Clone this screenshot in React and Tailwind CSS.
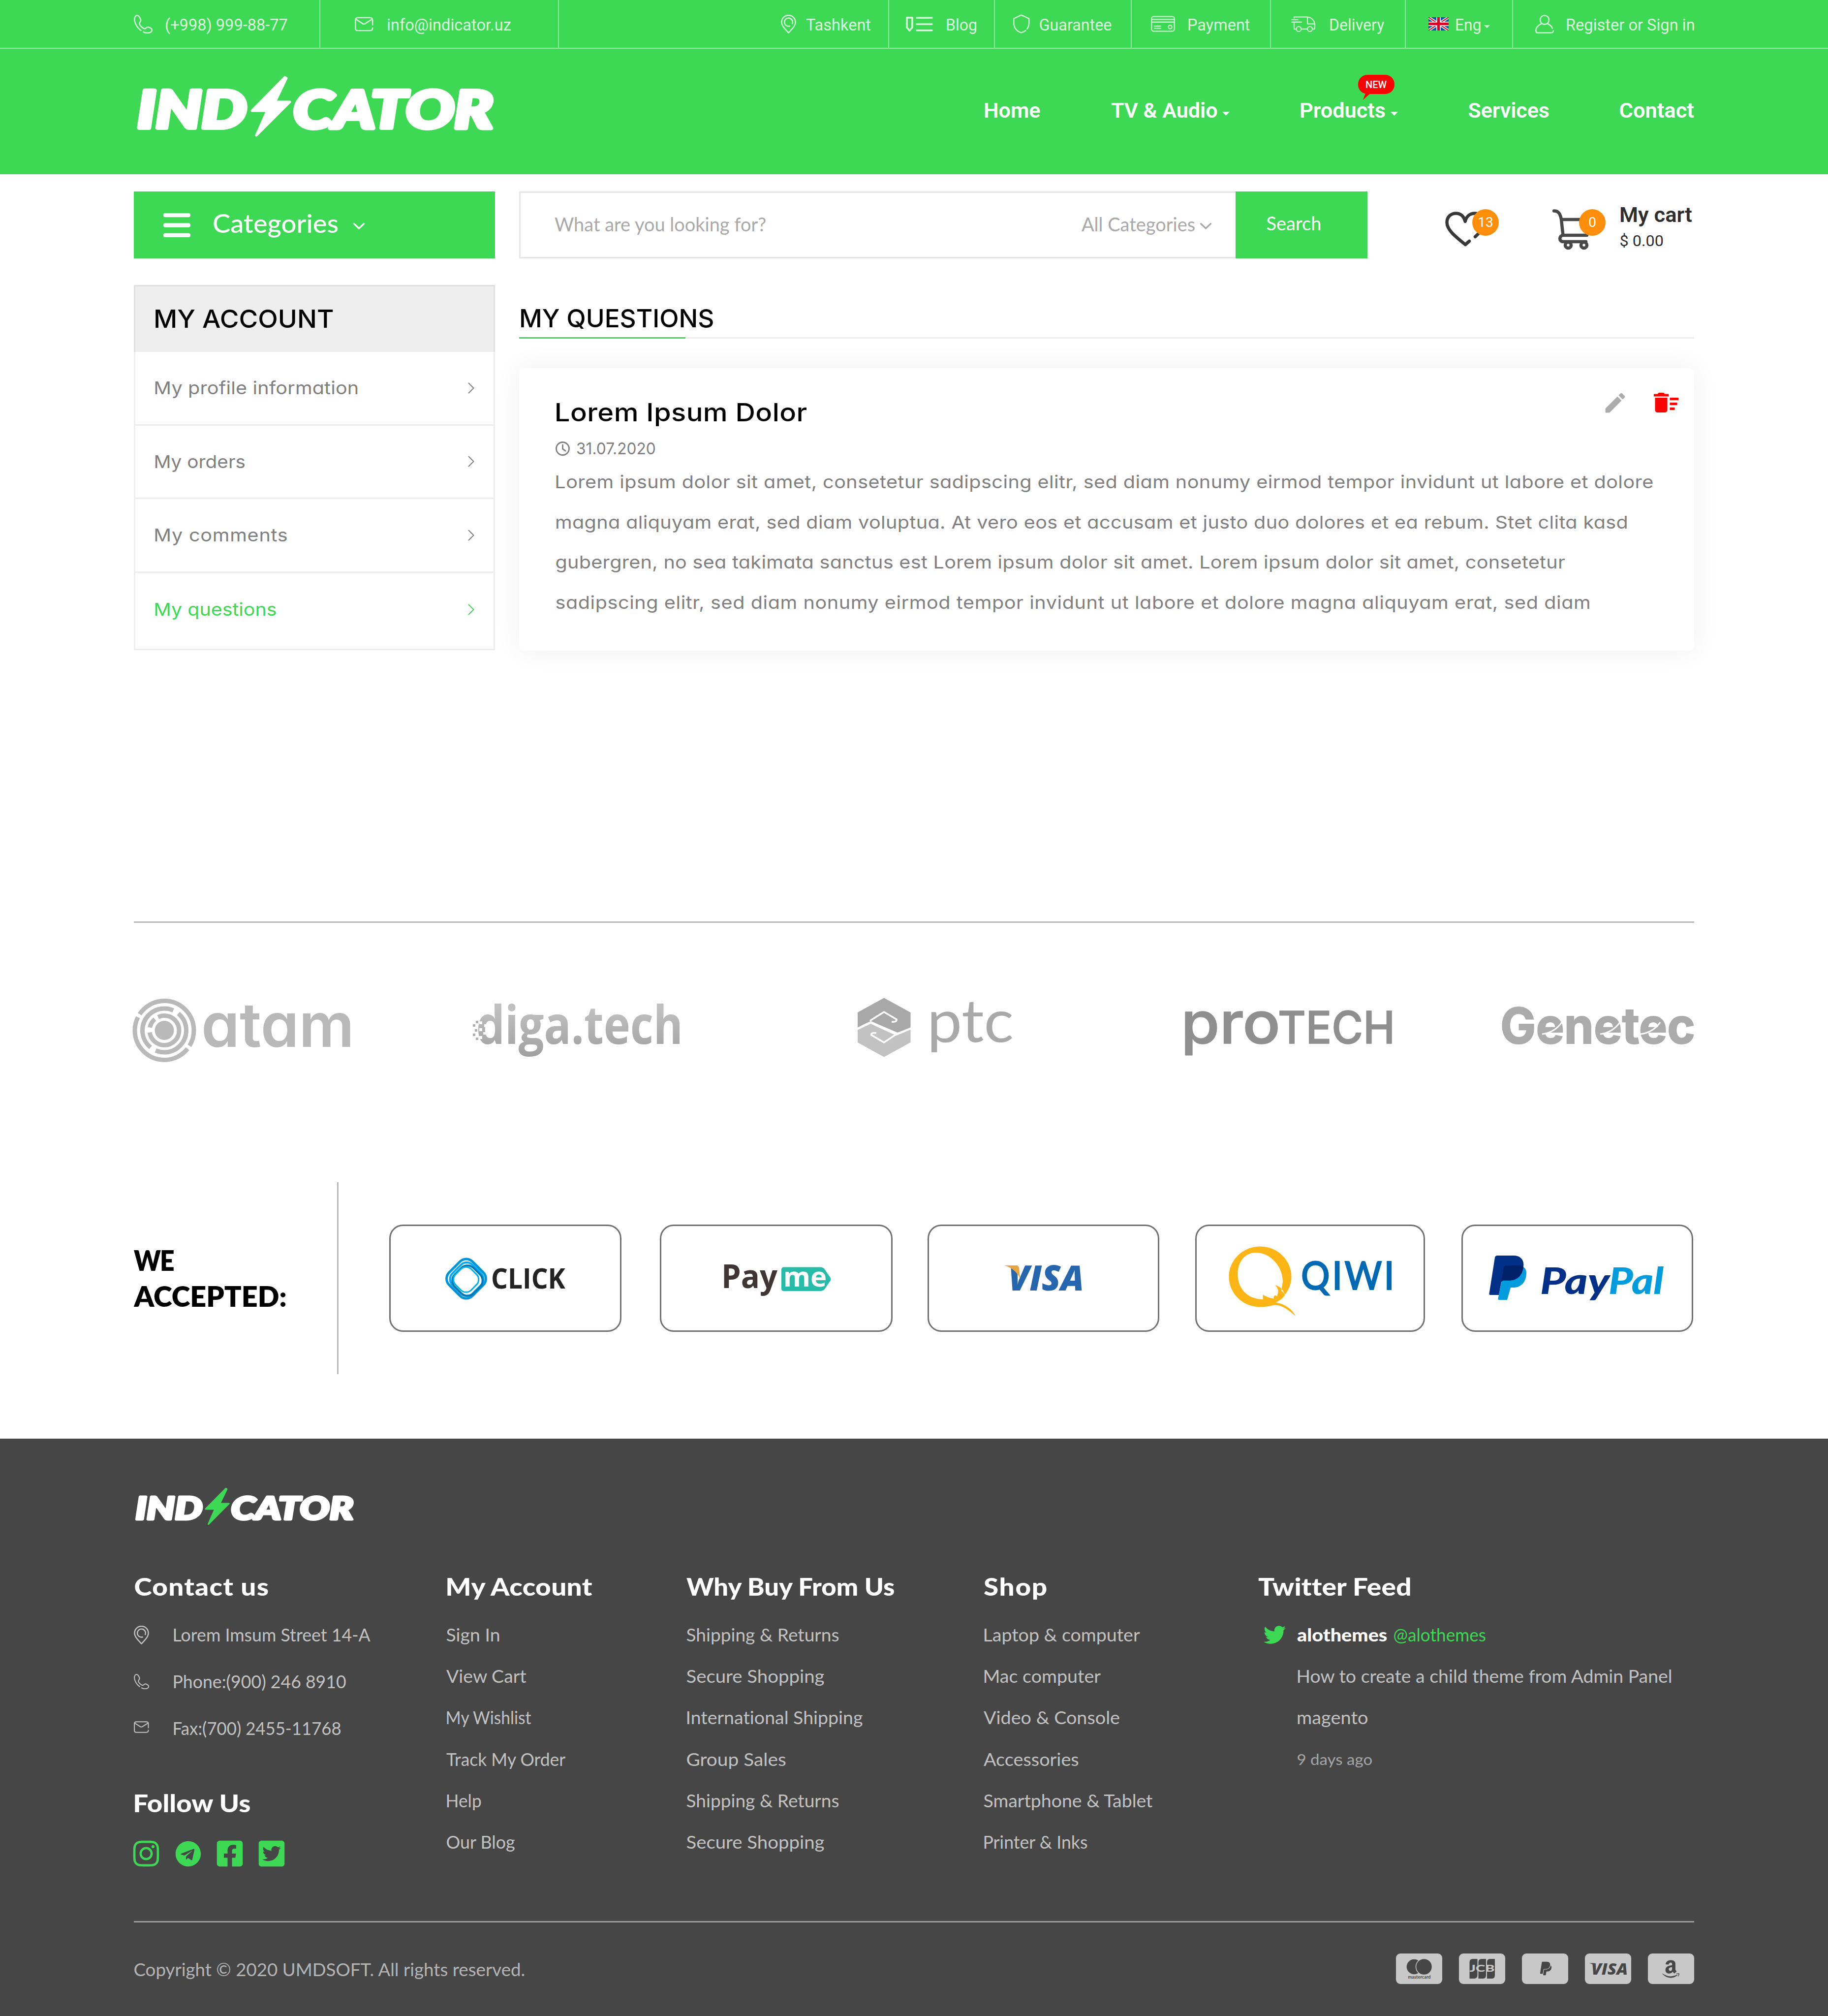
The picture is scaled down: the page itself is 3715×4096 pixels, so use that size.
import { useLayoutEffect, useRef } from "react";
import { MdEdit, MdDeleteSweep } from "react-icons/md";
import {
  FaInstagram,
  FaTelegram,
  FaFacebookSquare,
  FaTwitterSquare,
  FaTwitter,
  FaPaypal,
  FaAmazon,
} from "react-icons/fa";

const ROBOTO = "[font-family:Roboto,sans-serif]";
const LATO = "[font-family:Lato,sans-serif]";
const INTER = "[font-family:Inter,sans-serif] [font-feature-settings:'cv11']";

const canvas = typeof document === "undefined" ? null : document.createElement("canvas");

/* One line of text whose ink spans w pixels: the glyphs are widened or
   narrowed a little, and any remainder goes into the tracking. */
function Fit({ w, className = "", children }) {
  const box = useRef(null);
  const ref = useRef(null);
  useLayoutEffect(() => {
    const el = ref.current;
    const cs = getComputedStyle(el);
    const ctx = canvas.getContext("2d");
    ctx.font = `${cs.fontStyle} ${cs.fontWeight} ${cs.fontSize} ${cs.fontFamily}`;
    const text = el.textContent;
    const m = ctx.measureText(text);
    el.style.letterSpacing = "0px";
    const natural = el.offsetWidth;
    const left = -m.actualBoundingBoxLeft * 0.5;
    const right = (m.width - m.actualBoundingBoxRight) * 0.7;
    const ink = natural - left - right;
    const scale = Math.min(1.1, Math.max(0.92, w / ink));
    el.style.letterSpacing = (w / scale - ink) / Math.max(1, text.length - 1) + "px";
    el.style.transform = `translateX(${-left * scale}px) scaleX(${scale})`;
    box.current.style.width = w + "px";
  }, [w]);
  return (
    <span ref={box} className={"block shrink-0 whitespace-nowrap [font-variant-ligatures:none] " + className}>
      <span ref={ref} className="inline-block w-max origin-left align-top">
        {children}
      </span>
    </span>
  );
}

function Line({ w, h, vw, vh, sw = 2.7, className = "", children }) {
  return (
    <svg
      width={w}
      height={h}
      viewBox={`0 0 ${vw} ${vh}`}
      fill="none"
      stroke="currentColor"
      strokeWidth={sw}
      strokeLinecap="round"
      strokeLinejoin="round"
      className={"shrink-0 " + className}
    >
      {children}
    </svg>
  );
}

const Phone = ({ s = 38 }) => (
  <Line w={s} h={s} vw={42} vh={42}>
    <path d="M16 35C7 29 1 17 1.5 9C2 4 5 1 8 1.5C11 2 14 7 15.5 11C17 15 12 17 12.5 20C13 24 20 31 24.5 31.5C27 31.5 29 27 32 27.5C36 28.5 40 31 41 34C41 39 35 41 30 41C27 41 24 40 21.5 38.5" />
  </Line>
);
const Mail = ({ w = 38, h = 30 }) => (
  <Line w={w} h={h} vw={42} vh={32}>
    <path d="M40 18V7Q40 1.5 34 1.5H7Q1.5 1.5 1.5 7V25Q1.5 30.5 7 30.5H34Q40 30.5 40 24.5M2.5 5L17 14.5Q20.5 17 24 14.5L39 5" />
  </Line>
);
const Pin = () => (
  <Line w={31} h={38} vw={34} vh={42}>
    <path d="M17 40.5C10 33 1.5 25 1.5 16.5A15.5 15.5 0 0 1 32.5 16.5C32.5 25 24 33 17 40.5Z" />
    <path d="M25.5 20A9.2 9.2 0 1 0 19.5 25.4" />
  </Line>
);
const Blog = () => (
  <Line w={55} h={30} vw={60} vh={33} sw={4}>
    <path d="M2 2H14V24L8 31L2 24Z" />
    <path d="M24 2.5H58M24 16.5H58M24 30.5H58" />
  </Line>
);
const Shield = () => (
  <Line w={34} h={39} vw={38} vh={43}>
    <path d="M31.5 33C34.5 29 36 25 36 20V9.5L18.5 1.5L1.5 9.5V20C1.5 31 9 38.5 18.5 41.5C22.5 40.5 25.5 39 28.5 36.5" />
  </Line>
);
const Card = () => (
  <Line w={49} h={33} vw={54} vh={36} sw={2.3}>
    <rect x="1.5" y="1.5" width="51" height="33" rx="5" />
    <path d="M1.5 8H52.5M1.5 14H52.5M7.5 23H22M7.5 28H22" />
    <circle cx="43" cy="25" r="4" />
  </Line>
);
const Truck = () => (
  <Line w={49} h={32} vw={54} vh={35} sw={2.3}>
    <path d="M6.5 4V1.5H36C46 2 52 10 53 17L52.5 28.5H48M36 28.5H23M11 28.5H6.5V14M36.5 1.5V17H52.5M1.5 7.5H15M1.5 13H23" />
    <circle cx="17" cy="28.5" r="5.5" />
    <circle cx="42" cy="28.5" r="5.5" />
  </Line>
);
const User = () => (
  <Line w={38} h={38} vw={42} vh={42}>
    <circle cx="21" cy="11.5" r="10" />
    <path d="M14 20C6 24 1 30 1.5 36.5Q2 40.5 6 40.5H36Q40.5 40.5 40.5 36M28 20C34 23 37.5 27 38.5 30.5" />
  </Line>
);
const Flag = () => (
  <svg width="41" height="27" viewBox="0 0 60 40" preserveAspectRatio="none" className="shrink-0">
    <rect width="60" height="40" fill="#0052b4" />
    <path d="M0 0L60 40M60 0L0 40" stroke="#fff" strokeWidth="8" />
    <path d="M0 0L60 40M60 0L0 40" stroke="#d80027" strokeWidth="3" />
    <path d="M30 0V40M0 20H60" stroke="#fff" strokeWidth="13" />
    <path d="M30 0V40M0 20H60" stroke="#d80027" strokeWidth="8" />
  </svg>
);
const Caret = ({ w = 15, h = 8, className = "" }) => (
  <svg width={w} height={h} viewBox="0 0 15 8" preserveAspectRatio="none" className={"shrink-0 " + className}>
    <path d="M0 0H15L7.5 8Z" fill="currentColor" />
  </svg>
);
const ChevDown = ({ className = "" }) => (
  <Line w={25} h={15} vw={25} vh={15} sw={3.2} className={className}>
    <path d="M2.5 2.5L12.5 12L22.5 2.5" />
  </Line>
);

function Logo({ width, bolt }) {
  return (
    <svg width={width} height={(width * 132) / 738} viewBox="272 150 738 132" className="shrink-0 overflow-visible">
      <g
        fill="#fff"
        stroke="#fff"
        strokeWidth="8"
        strokeLinejoin="round"
        fontFamily="Lato, sans-serif"
        fontWeight="900"
        fontStyle="italic"
        fontSize="104"
      >
        <text x="279" y="259.500" textLength="222" lengthAdjust="spacingAndGlyphs">IND</text>
        <text x="596" y="259.500" textLength="406" lengthAdjust="spacingAndGlyphs">CATOR</text>
      </g>
      <path
        d="M579 157L512 225L543 225L521 275L589 207L559 207L582 159Z"
        fill={bolt}
        stroke={bolt}
        strokeWidth="5"
        strokeLinejoin="round"
      />
    </svg>
  );
}

const CELL = "flex h-full shrink-0 items-center border-r-2 border-white/40";
const TXT = "mt-[4px] text-[33px] leading-none " + ROBOTO;

function Header() {
  return (
    <header className="h-[354px] bg-[#3dd955] text-white">
      <div className="flex h-[99px] items-center border-b-2 border-white/45 pl-[272px] text-[#d9f7dd]">
        <div className={CELL + " w-[379px] gap-[26px]"}>
          <Phone />
          <Fit w={248} className={TXT}>(+998) 999-88-77</Fit>
        </div>
        <div className={CELL + " w-[485px] gap-[28px] pl-[70px]"}>
          <Mail />
          <Fit w={251.5} className={TXT}>info@indicator.uz</Fit>
        </div>
        <div className={CELL + " ml-[451px] w-[220px] gap-[20px]"}>
          <Pin />
          <Fit w={131.5} className={TXT}>Tashkent</Fit>
        </div>
        <div className={CELL + " w-[215px] gap-[27px] pl-[34px]"}>
          <Blog />
          <Fit w={62} className={TXT}>Blog</Fit>
        </div>
        <div className={CELL + " w-[278px] gap-[19px] pl-[37px]"}>
          <Shield />
          <Fit w={147} className={TXT}>Guarantee</Fit>
        </div>
        <div className={CELL + " w-[283px] gap-[26px] pl-[39px]"}>
          <Card />
          <Fit w={125.5} className={TXT}>Payment</Fit>
        </div>
        <div className={CELL + " w-[274px] gap-[29px] pl-[41px]"}>
          <Truck />
          <Fit w={112} className={TXT}>Delivery</Fit>
        </div>
        <div className={CELL + " w-[218px] pl-[46px]"}>
          <Flag />
          <Fit w={52} className={TXT + " ml-[14px]"}>Eng</Fit>
          <Caret w={12} h={6} className="ml-[6px] mt-[11px]" />
        </div>
        <div className="flex shrink-0 items-center gap-[25px] pl-[45px]">
          <User />
          <Fit w={260} className={TXT}>Register or Sign in</Fit>
        </div>
      </div>
      <div className={"flex items-start pl-[272px] pt-[51px] text-[42px] font-semibold leading-none " + ROBOTO}>
        <Logo width={738} bolt="#fff" />
        <nav className="ml-[990px] mt-[54px] flex items-center gap-[143px]">
          <Fit w={114.5}>Home</Fit>
          <div className="flex items-center gap-[10px]">
            <Fit w={216}>TV &amp; Audio</Fit>
            <Caret className="mt-[11px]" />
          </div>
          <div className="relative flex items-center gap-[11px]">
            <Fit w={173}>Products</Fit>
            <Caret className="mt-[11px]" />
            <div className="absolute -top-[52px] left-[118px] flex h-[39px] w-[74px] items-center justify-center rounded-[19px] bg-[#ff0000] text-[20px] font-medium leading-none">
              NEW
              <svg width="18" height="16" viewBox="0 0 18 16" className="absolute left-[10px] top-[35px]">
                <path d="M6 0L0 16L18 0Z" fill="#ff0000" />
              </svg>
            </div>
          </div>
          <Fit w={164}>Services</Fit>
          <Fit w={151.5}>Contact</Fit>
        </nav>
      </div>
    </header>
  );
}

function Badge({ n }) {
  return (
    <span className={"absolute right-0 top-0 flex size-[54px] items-center justify-center rounded-full bg-[#ff8f0b] text-[28px] leading-none text-white " + ROBOTO}>
      {n}
    </span>
  );
}

function SearchRow() {
  return (
    <div className="mt-[35px] flex h-[136px] items-center pl-[272px]">
      <div className={"flex h-full w-[734px] shrink-0 items-center bg-[#3dd955] pb-[10px] pl-[60px] text-white " + LATO}>
        <svg width="55" height="49" viewBox="0 0 55 49" className="mt-[10px] shrink-0">
          <path d="M4 4H51M4 24.5H51M4 45H51" stroke="#fff" strokeWidth="8.5" strokeLinecap="round" />
        </svg>
        <Fit w={254} className="ml-[46px] text-[53px] font-medium leading-none">Categories</Fit>
        <ChevDown className="ml-[30px] mt-[14px]" />
      </div>
      <div className={"ml-[49px] flex h-full w-[1456px] shrink-0 items-center border-[3px] border-r-0 border-[#e6e6e6] pb-[3px] text-[39px] leading-none text-[#a9a9a9] " + LATO}>
        <Fit w={429} className="ml-[69px]">What are you looking for?</Fit>
        <Fit w={231} className="ml-[642px]">All Categories</Fit>
        <ChevDown className="ml-[9px] mt-[8px]" />
      </div>
      <div className={"flex h-full w-[268px] shrink-0 items-center bg-[#3dd955] pb-[9px] pl-[63px] text-[38px] leading-none text-white " + LATO}>
        <Fit w={110}>Search</Fit>
      </div>
      <div className="relative ml-[158px] mt-[18px] h-[83px] w-[109px] shrink-0">
        <Line w={84} h={83} vw={84} vh={83} sw={6.5} className="text-[#383838]">
          <path d="M49 65L41 72C20 55 3.5 42 3.5 27C3.5 15 12 8.5 22 8.5C32 8.5 38 15 40.6 25C43 15 50 8.5 60 8.5C70 8.5 78 15 78 27C78 38 70 48 61 56" />
        </Line>
        <Badge n="13" />
      </div>
      <div className="relative ml-[109px] mt-[18px] h-[83px] w-[108px] shrink-0">
        <Line w={84} h={83} vw={84} vh={83} sw={6.5} className="text-[#484848]">
          <path d="M3 3.5C12 3.5 16 9 18 21L21.5 53H70L77 21H18M21.5 53C13 54 13 66 22 66H68" />
          <circle cx="32" cy="73" r="6" />
          <circle cx="64" cy="73" r="6" />
        </Line>
        <Badge n="0" />
      </div>
      <div className={"ml-[29px] mt-[11px] flex flex-col text-[#2e2e2e] " + ROBOTO}>
        <Fit w={147} className="text-[42px] font-semibold leading-[53px]">My cart</Fit>
        <Fit w={88} className="text-[32px] leading-[53px]">$ 0.00</Fit>
      </div>
    </div>
  );
}

const MENU = [
  ["My profile information", 413],
  ["My orders", 184],
  ["My comments", 270],
];

function MenuRow({ label, w, className }) {
  return (
    <div className={"flex h-[149.5px] items-center justify-between border-b-[3px] border-[#eeeeee] pl-[39px] pr-[38px] text-[36px] leading-none " + className}>
      <Fit w={w}>{label}</Fit>
      <Line w={14} h={23} vw={14} vh={23} sw={2}>
        <path d="M1.5 1.5L11.5 11.5L1.5 21.5" />
      </Line>
    </div>
  );
}

function Main() {
  return (
    <main className={"mt-[54px] flex pl-[272px] " + INTER}>
      <aside className="w-[734px] shrink-0">
        <div className="flex h-[136px] items-center border-[3px] border-b-0 border-[#e0e0e0] bg-[#eeeeee] pb-[3px] pl-[39px] text-[51px] font-medium leading-none text-black">
          <Fit w={363}>MY ACCOUNT</Fit>
        </div>
        <div className="border-x-[3px] border-[#eeeeee]">
          {MENU.map(([label, w]) => (
            <MenuRow key={label} label={label} w={w} className="text-[#808080]" />
          ))}
          <div className="h-[157px] border-b-[3px] border-[#eeeeee] [&>div]:border-b-0">
            <MenuRow label="My questions" w={248} className="text-[#3dd955]" />
          </div>
        </div>
      </aside>
      <section className="ml-[49px] w-[2388px] shrink-0">
        <div className="flex h-[106px] items-start pl-[2px] pt-[42px] text-[51px] font-medium leading-none text-black">
          <Fit w={393}>MY QUESTIONS</Fit>
        </div>
        <div className="flex h-[3px]">
          <div className="w-[338px] bg-[#3dd955]" />
          <div className="flex-1 bg-[#eeeeee]" />
        </div>
        <article className="mt-[60px] h-[574px] rounded-[10px] bg-white pl-[74px] pr-[27px] shadow-[0_0_54px_rgba(0,0,0,0.065)]">
          <div className="flex h-[143px] items-start justify-between">
            <Fit w={511} className="mt-[60px] text-[51px] font-medium leading-[60px] text-black">Lorem Ipsum Dolor</Fit>
            <div className="mt-[40px] flex items-center gap-[47px]">
              <MdEdit className="size-[53px] text-[#acacac]" />
              <MdDeleteSweep className="size-[60px] text-[#ff0000]" />
            </div>
          </div>
          <div className="flex h-[40px] items-center gap-[14px] text-[33px] leading-none text-[#808080]">
            <Line w={29} h={29} vw={29} vh={29} sw={2.8}>
              <circle cx="14.5" cy="14.5" r="13" />
              <path d="M14.5 7V15L20 19" />
            </Line>
            <Fit w={160}>31.07.2020</Fit>
          </div>
          <div className="mt-[8px] flex flex-col text-[36px] leading-[81.5px] text-[#808080]">
            <Fit w={2231}>Lorem ipsum dolor sit amet, consetetur sadipscing elitr, sed diam nonumy eirmod tempor invidunt ut labore et dolore</Fit>
            <Fit w={2178}>magna aliquyam erat, sed diam voluptua. At vero eos et accusam et justo duo dolores et ea rebum. Stet clita kasd</Fit>
            <Fit w={2051}>gubergren, no sea takimata sanctus est Lorem ipsum dolor sit amet. Lorem ipsum dolor sit amet, consetetur</Fit>
            <Fit w={2102}>sadipscing elitr, sed diam nonumy eirmod tempor invidunt ut labore et dolore magna aliquyam erat, sed diam</Fit>
          </div>
        </article>
      </section>
    </main>
  );
}

function Brands() {
  return (
    <div className="ml-[272px] mt-[550px] w-[3171px] border-t-[3px] border-[#b8b8b8]">
      <div className="mt-[146px] flex h-[145px] items-start">
        <svg width="446" height="145" viewBox="272 2020 446 145" className="shrink-0 overflow-visible">
          <g fill="none" stroke="#b9b9b9" strokeWidth="9">
            <circle cx="334" cy="2092.5" r="60" strokeDasharray="176 7 187 7" strokeDashoffset="-40" />
            <circle cx="334" cy="2092.5" r="44.5" strokeDasharray="128 12 128 12" strokeDashoffset="40" />
            <circle cx="334" cy="2092.5" r="30" strokeDasharray="150 10 20 8" strokeDashoffset="60" />
          </g>
          <circle cx="334" cy="2092.5" r="19.5" fill="#b9b9b9" />
          <text x="409" y="2126" textLength="311" lengthAdjust="spacingAndGlyphs" fontFamily="Inter, sans-serif" fontWeight="600" fontSize="124" fill="#b9b9b9" className="[font-feature-settings:'cv11']">atam</text>
        </svg>
        <svg width="430" height="145" viewBox="955 2020 430 145" className="ml-[237px] shrink-0 overflow-visible">
          <defs>
            <linearGradient id="digaFill" x1="0" y1="0" x2="0" y2="1">
              <stop offset="0.3" stopColor="#c0c0c0" />
              <stop offset="1" stopColor="#9e9e9e" />
            </linearGradient>
          </defs>
          <text x="968" y="2120" textLength="420" lengthAdjust="spacingAndGlyphs" fontFamily="Open Sans, sans-serif" fontWeight="700" fontSize="108" fill="url(#digaFill)">diga.tech</text>
          <g fill="#fff">
            <rect x="974" y="2074" width="6" height="6" />
            <rect x="984" y="2080" width="6" height="6" />
            <rect x="974" y="2088" width="6" height="6" />
            <rect x="982" y="2096" width="5" height="5" />
            <rect x="974" y="2104" width="6" height="6" />
          </g>
          <g fill="#b0b0b0">
            <rect x="961" y="2080" width="5" height="5" />
            <rect x="967" y="2073" width="5" height="5" />
            <rect x="965" y="2090" width="5" height="5" />
            <rect x="961" y="2099" width="5" height="5" />
            <rect x="967" y="2107" width="5" height="5" />
          </g>
        </svg>
        <svg width="316" height="145" viewBox="1742 2020 316 145" className="ml-[357px] shrink-0 overflow-visible">
          <path d="M1743 2056L1796.500 2026.500L1850.500 2056V2086.500L1824 2097L1769.500 2073.500L1743 2086.500Z" fill="#a8a8a8" />
          <path d="M1743 2091.500L1769.500 2079L1821.500 2103L1850.500 2091V2117L1796.500 2146.500L1743 2117Z" fill="#c2c2c2" />
          <path d="M1768 2073L1796.500 2055L1822 2070Q1823 2076 1812 2075M1825 2098L1796.500 2117L1771 2102Q1770 2096 1781 2098" stroke="#fff" strokeWidth="3.500" fill="none" />
          <text x="1884" y="2116" textLength="176" lengthAdjust="spacingAndGlyphs" fontFamily="Lato, sans-serif" fontWeight="400" fontSize="120" fill="#a9a9a9">ptc</text>
        </svg>
        <svg width="426" height="145" viewBox="2405 2020 426 145" className="ml-[347px] shrink-0 overflow-visible">
          <g fontFamily="Inter, sans-serif" fontWeight="500" fill="#8f8f8f" stroke="#8f8f8f" strokeWidth="1.500" strokeLinejoin="round">
            <text x="2400" y="2119" fontSize="118" textLength="202" lengthAdjust="spacingAndGlyphs">pro</text>
            <text x="2597" y="2119" fontSize="91" textLength="238" lengthAdjust="spacingAndGlyphs">TECH</text>
          </g>
        </svg>
        <svg width="395" height="145" viewBox="3050 2020 395 145" className="ml-[219px] shrink-0 overflow-visible">
          <text x="3049" y="2119" textLength="396" lengthAdjust="spacingAndGlyphs" fontFamily="Inter, sans-serif" fontWeight="700" fontSize="100" fill="#ababab" stroke="#ababab" strokeWidth="2">Genetec</text>
          <path d="M3134 2100C3152 2098 3166 2088 3174 2076M3252 2100C3270 2098 3284 2088 3292 2076M3334 2100C3352 2098 3366 2088 3374 2076" stroke="#fff" strokeWidth="3" fill="none" />
        </svg>
      </div>
    </div>
  );
}

function PayBox({ x, w, className = "", children }) {
  return (
    <div className={"h-[218px] shrink-0 rounded-[28px] border-[3px] border-[#707070] " + className}>
      <svg width={w - 6} height="212" viewBox={`${x + 3} 2491 ${w - 6} 212`}>
        {children}
      </svg>
    </div>
  );
}

function Payments() {
  return (
    <div className={"mt-[236px] flex h-[390px] items-center pl-[272px] " + LATO}>
      <div className="flex w-[413px] shrink-0 flex-col text-[56px] font-extrabold leading-[73px] text-black">
        <Fit w={82}>WE</Fit>
        <Fit w={309}>ACCEPTED:</Fit>
      </div>
      <div className="h-full w-[3px] shrink-0 bg-[#b8b8b8]" />
      <PayBox x={791} w={472} className="ml-[103px] w-[472px]">
        <g fill="none" transform="rotate(45 947.5 2598)">
          <rect x="914" y="2564.500" width="67" height="67" rx="18" stroke="#0095da" strokeWidth="5" />
          <rect x="920" y="2569" width="58" height="58" rx="17" stroke="#00a9ff" strokeWidth="4" />
          <rect x="925" y="2572" width="54" height="54" rx="18" stroke="#0078b4" strokeWidth="4" />
          <rect x="926" y="2577" width="45" height="45" rx="15" stroke="#00b2ea" strokeWidth="3" />
        </g>
        <text x="998" y="2618" textLength="151" lengthAdjust="spacingAndGlyphs" fontFamily="Open Sans, sans-serif" fontWeight="700" fontSize="58" fill="#232323">CLICK</text>
      </PayBox>
      <PayBox x={1341} w={473} className="ml-[78px] w-[473px]">
        <text x="1466" y="2617" textLength="114" lengthAdjust="spacingAndGlyphs" fontFamily="Open Sans, sans-serif" fontWeight="700" fontSize="66" fill="#3f3534">Pay</text>
        <path d="M1593 2574.500H1667Q1673 2574.500 1676 2579L1687 2595Q1690 2599 1687 2603L1676 2619Q1673 2623 1667 2623H1593Q1588 2623 1588 2618V2580Q1588 2574.500 1593 2574.500Z" fill="#26bca8" />
        <text x="1592" y="2614" textLength="88" lengthAdjust="spacingAndGlyphs" fontFamily="Open Sans, sans-serif" fontWeight="700" fontSize="56" fill="#fff">me</text>
      </PayBox>
      <PayBox x={1885} w={471} className="ml-[71px] w-[471px]">
        <text x="2049" y="2621.500" textLength="154" lengthAdjust="spacingAndGlyphs" fontFamily="Open Sans, sans-serif" fontWeight="800" fontStyle="italic" fontSize="70" fill="#2566af">VISA</text>
        <path d="M2041 2571H2066Q2070 2571 2071 2576L2073 2598C2068 2586 2058 2576 2041 2571Z" fill="#e6a540" />
      </PayBox>
      <PayBox x={2429} w={467} className="ml-[73px] w-[467px]">
        <path
          fillRule="evenodd"
          fill="#fdb415"
          d="M2561 2532.500C2596 2532.500 2624.500 2560 2624.500 2594C2624.500 2608 2619 2621 2611 2631C2608 2622 2604 2614 2591 2611C2598 2617 2599 2624 2596 2631L2594 2639C2582 2638 2570 2634 2567 2630Q2566 2637 2567 2640C2535 2640 2515.500 2618 2515.500 2589C2515.500 2562 2531 2545 2552 2545C2582 2545 2607 2573 2607 2604L2604 2622L2612 2630C2606 2640 2598 2644 2592 2646C2613 2650 2626 2660 2633 2674C2618 2661 2602 2649 2587 2652C2579 2654 2570 2655.500 2561 2655.500C2526 2655.500 2497.500 2628 2497.500 2594C2497.500 2560 2526 2532.500 2561 2532.500Z"
        />
        <ellipse cx="2592" cy="2636" rx="3.500" ry="4" fill="#fdb415" />
        <g fontFamily="Lato, sans-serif" fontWeight="500" fontSize="79" fill="#0069b4" stroke="#0069b4" strokeWidth="2">
          <text x="2644" y="2620.500" textLength="205" lengthAdjust="spacing" transform="translate(2644 0) scale(0.925 1) translate(-2644 0)">QIWI</text>
        </g>
      </PayBox>
      <PayBox x={2970} w={471} className="ml-[74px] w-[471px]">
        <path d="M3059 2571H3086Q3102 2573 3102 2586C3102 2606 3090 2616 3076 2616H3070L3063 2641H3046Q3044 2641 3044.500 2638Z" fill="#009cde" />
        <path d="M3043 2551H3076C3090 2551 3098 2560 3096 2573C3094 2592 3083 2601.500 3067 2601.500H3056Q3052 2602 3051 2606L3046 2631H3028Q3026 2631 3026.500 2628L3038 2555Q3039 2551 3043 2551Z" fill="#003087" />
        <path d="M3062 2571H3086Q3092 2571 3096 2574C3094 2592 3083 2601.500 3067 2601.500H3056L3051 2603L3056 2575Q3057 2571 3062 2571Z" fill="#012169" />
        <g fontFamily="Lato, sans-serif" fontWeight="900" fontStyle="italic" fontSize="74">
          <text x="3130" y="2628.500" textLength="141" lengthAdjust="spacingAndGlyphs" fill="#003087">Pay</text>
          <text x="3269" y="2628.500" textLength="112" lengthAdjust="spacingAndGlyphs" fill="#009cde">Pal</text>
        </g>
      </PayBox>
    </div>
  );
}

const COLS = [
  {
    title: ["My Account", 297],
    box: "w-[488px]",
    items: [["Sign In", 107.5], ["View Cart", 163], ["My Wishlist", 172.5], ["Track My Order", 242.5], ["Help", 71], ["Our Blog", 140]],
  },
  {
    title: ["Why Buy From Us", 422],
    box: "w-[604px]",
    items: [["Shipping & Returns", 310], ["Secure Shopping", 280], ["International Shipping", 359], ["Group Sales", 202], ["Shipping & Returns", 310], ["Secure Shopping", 280]],
  },
  {
    title: ["Shop", 128],
    box: "w-[558px]",
    items: [["Laptop & computer", 318], ["Mac computer", 238], ["Video & Console", 276], ["Accessories", 193], ["Smartphone & Tablet", 344], ["Printer & Inks", 211]],
  },
];

const HEAD = "text-[50px] font-black leading-[60px] text-white";

function PayIcon({ children }) {
  return (
    <svg width="94" height="62" viewBox="0 0 94 62" className="shrink-0 rounded-[9px] bg-[#c8c8c8] text-[#464646]">
      {children}
    </svg>
  );
}

function Footer() {
  return (
    <footer className={"mt-[131px] h-[1173px] overflow-hidden bg-[#464646] pl-[271px] text-[#c2c2c2] " + LATO}>
      <div className="flex h-[268px] items-start pt-[97px]">
        <Logo width={452} bolt="#3dd955" />
      </div>
      <div className="flex h-[712px] pl-[1px] pt-[2px]">
        <div className="w-[635px] shrink-0">
          <h3 className="flex pl-[1px]"><Fit w={272} className={HEAD}>Contact us</Fit></h3>
          <div className="mt-[21px] flex flex-col text-[36.5px] leading-[95px]">
            <div className="flex items-center gap-[49px]">
              <Pin />
              <Fit w={401}>Lorem Imsum Street 14-A</Fit>
            </div>
            <div className="flex items-center gap-[49px]">
              <Phone s={31} />
              <Fit w={352}>Phone:(900) 246 8910</Fit>
            </div>
            <div className="flex items-center gap-[49px]">
              <div className="-mt-[6px] flex"><Mail w={31} h={24} /></div>
              <Fit w={341}>Fax:(700) 2455-11768</Fit>
            </div>
          </div>
          <h3 className="mt-[74px] flex"><Fit w={236} className={HEAD}>Follow Us</Fit></h3>
          <div className="mt-[43px] flex items-center text-[#3dd955]">
            <FaInstagram className="-ml-[5px] size-[60px]" />
            <FaTelegram className="ml-[29px] size-[53px]" />
            <FaFacebookSquare className="ml-[28px] size-[60px]" />
            <FaTwitterSquare className="ml-[25px] size-[60px]" />
          </div>
        </div>
        {COLS.map((c) => (
          <div key={c.title[0]} className={"shrink-0 " + c.box}>
            <h3 className="flex"><Fit w={c.title[1]} className={HEAD}>{c.title[0]}</Fit></h3>
            <div className="mt-[26px] flex flex-col items-start text-[36.5px] leading-[84.2px]">
              {c.items.map(([t, w], i) => (
                <Fit key={i} w={w}>{t}</Fit>
              ))}
            </div>
          </div>
        ))}
        <div className="shrink-0">
          <h3 className="flex"><Fit w={310} className={HEAD}>Twitter Feed</Fit></h3>
          <div className="mt-[26px] flex text-[36.5px] leading-[84.2px]">
            <FaTwitter className="ml-[11px] mt-[20px] size-[45px] shrink-0 text-[#3dd955]" />
            <div className="ml-[23px] flex flex-col items-start">
              <div className="flex gap-[13px]">
                <Fit w={183} className="font-black text-white">alothemes</Fit>
                <Fit w={187} className="text-[#3dd955]">@alothemes</Fit>
              </div>
              <Fit w={761}>How to create a child theme from Admin Panel</Fit>
              <Fit w={144}>magento</Fit>
              <Fit w={153} className="text-[31.5px] text-[#a6a6a6]">9 days ago</Fit>
            </div>
          </div>
        </div>
      </div>
      <div className="ml-[1px] h-[3px] w-[3171px] bg-[#9a9a9a]" />
      <div className="ml-[1px] flex h-[187px] w-[3171px] items-center justify-between">
        <Fit w={794} className="mt-[4px] text-[36.5px] leading-none text-[#b4b4b4]">Copyright © 2020 UMDSOFT. All rights reserved.</Fit>
        <div className="flex gap-[34px]">
          <PayIcon>
            <circle cx="37" cy="27" r="15.300" fill="currentColor" />
            <circle cx="57" cy="27" r="16.500" fill="currentColor" stroke="#c8c8c8" strokeWidth="1.500" />
            <text x="47.500" y="51" textAnchor="middle" textLength="46" lengthAdjust="spacingAndGlyphs" fontFamily="Lato, sans-serif" fontWeight="700" fontSize="9" fill="currentColor">mastercard</text>
          </PayIcon>
          <PayIcon>
            <g fill="currentColor">
              <path d="M21.500 18Q21.500 11 28 11H37.500V44Q37.500 51 31 51H21.500Z" />
              <path d="M39.500 18Q39.500 11 46 11H55V44Q55 51 49 51H39.500Z" />
              <path d="M57 18Q57 11 63 11H73V44Q73 51 67 51H57Z" />
            </g>
            <text x="21.500" y="37" textLength="51" lengthAdjust="spacingAndGlyphs" fontFamily="Lato, sans-serif" fontWeight="900" fontSize="18" fill="#c8c8c8">JCB</text>
          </PayIcon>
          <PayIcon>
            <FaPaypal x="33" y="15" size={31} />
          </PayIcon>
          <PayIcon>
            <text x="13" y="42.500" textLength="74" lengthAdjust="spacingAndGlyphs" fontFamily="Open Sans, sans-serif" fontWeight="800" fontStyle="italic" fontSize="32" fill="currentColor">VISA</text>
            <path d="M8 19.500H19L22 28Q17 21 8 19.500Z" fill="currentColor" />
          </PayIcon>
          <PayIcon>
            <FaAmazon x="26" y="11" size={41} />
          </PayIcon>
        </div>
      </div>
    </footer>
  );
}

export default function App() {
  return (
    <div className="flex h-[4096px] w-[3715px] flex-col overflow-hidden bg-white [&>*]:shrink-0">
      <Header />
      <SearchRow />
      <Main />
      <Brands />
      <Payments />
      <Footer />
    </div>
  );
}
